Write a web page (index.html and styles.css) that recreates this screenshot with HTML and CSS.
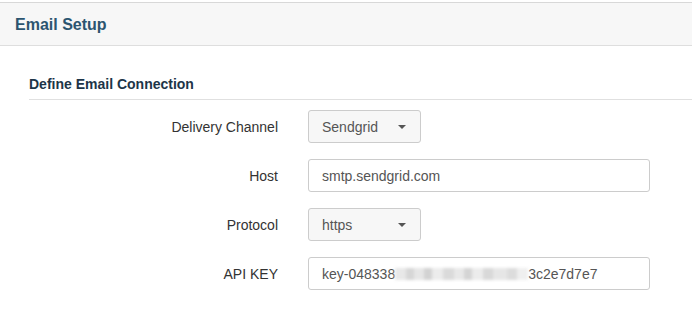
FILE: index.html
```html
<!DOCTYPE html>
<html>
<head>
<meta charset="utf-8">
<link rel="stylesheet" href="styles.css">
</head>
<body>
<div class="panel">
  <div class="panel-heading">Email Setup</div>
  <div class="panel-body">
    <h4 class="section-title">Define Email Connection</h4>
    <form class="form">
      <div class="row">
        <label class="label">Delivery Channel</label>
        <div class="select">Sendgrid<span class="caret"></span></div>
      </div>
      <div class="row">
        <label class="label">Host</label>
        <div class="input">smtp.sendgrid.com</div>
      </div>
      <div class="row">
        <label class="label">Protocol</label>
        <div class="select">https<span class="caret"></span></div>
      </div>
      <div class="row">
        <label class="label">API KEY</label>
        <div class="input">key-048338<span class="blur"></span>3c2e7d7e7</div>
      </div>
    </form>
  </div>
</div>
</body>
</html>
```

FILE: styles.css
```css
html, body {
  margin: 0;
  padding: 0;
  background: #fff;
  font-family: "Liberation Sans", Arial, sans-serif;
}
.panel {
  margin-top: 2px;
  border-top: 1px solid #d8d8d8;
}
.panel-heading {
  background: #f7f7f7;
  border-bottom: 1px solid #dedede;
  height: 42px;
  line-height: 43px;
  padding-left: 15px;
  font-size: 16px;
  font-weight: bold;
  color: #2c5570;
}
.panel-body {
  padding: 30px 0 0 29px;
}
.section-title {
  margin: 0;
  font-size: 14px;
  font-weight: bold;
  color: #1d3548;
  line-height: 17px;
  padding-bottom: 6px;
  border-bottom: 1px solid #e0e0e0;
}
.form {
  margin-top: 10px;
  display: flex;
  flex-direction: column;
  gap: 16px;
}
.row {
  display: flex;
  align-items: center;
  height: 33px;
}
.label {
  width: 249px;
  text-align: right;
  padding-right: 30px;
  font-size: 14px;
  color: #333;
}
.select, .input {
  box-sizing: border-box;
  height: 33px;
  border: 1px solid #cccccc;
  border-radius: 3px;
  padding: 0 12px 0 13px;
  font-size: 14px;
  color: #555;
  display: flex;
  align-items: center;
}
.select {
  width: 113px;
  background: #f7f7f7;
  justify-content: space-between;
}
.input {
  width: 342px;
  background: #fff;
}
.caret {
  width: 0;
  height: 0;
  border-top: 4px solid #555;
  border-left: 4px solid transparent;
  border-right: 4px solid transparent;
  margin-right: 2px;
}
.blur {
  display: inline-block;
  width: 133px;
  height: 12px;
  background: linear-gradient(90deg, #e8e8e8 0 8%, #d6d6d6 8% 14%, #e6e6e6 14% 22%, #d2d2d2 22% 28%, #ececec 28% 36%, #dadada 36% 44%, #e8e8e8 44% 52%, #d4d4d4 52% 58%, #ececec 58% 66%, #d8d8d8 66% 74%, #e6e6e6 74% 84%, #dcdcdc 84% 92%, #efefef 92% 100%);
  filter: blur(1.5px);
}
```
